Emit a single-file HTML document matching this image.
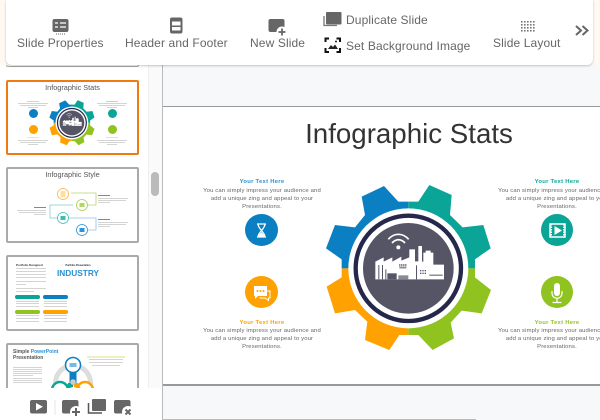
<!DOCTYPE html>
<html><head><meta charset="utf-8">
<style>
html,body{margin:0;padding:0;width:600px;height:420px;overflow:hidden;background:#fff;font-family:"Liberation Sans",sans-serif}
.a{position:absolute}
#top{left:0;top:0;width:600px;height:65px;background:#fff9f2}
#bar{left:6px;top:0;width:587px;height:65px;background:#fff;border-radius:0 0 6px 6px;box-shadow:0 1px 2px rgba(0,0,0,.22)}
.t{position:absolute;font-size:12px;color:#666;white-space:nowrap;letter-spacing:.12px;line-height:14px}
.thumb{position:absolute;left:6px;width:133px;height:76px;box-sizing:border-box;border:2px solid #aaa;border-radius:2px;background:#fff;overflow:hidden}
.in{position:absolute;left:0;top:0;width:129px;height:72px;filter:blur(.3px)}
.tt{position:absolute;left:0;right:0;text-align:center;font-size:7.3px;color:#555;line-height:10px;white-space:nowrap}
.ln{position:absolute;height:1px;background:#d4d4d4}
.c{position:absolute;width:33px;height:33px;border-radius:50%}
.h{position:absolute;width:140px;text-align:center;font-size:5.9px;letter-spacing:.27px;line-height:8px;font-weight:bold;white-space:nowrap}
.p{position:absolute;width:140px;text-align:center;font-size:5.9px;letter-spacing:.15px;line-height:8px;color:#666;white-space:nowrap}
</style></head><body>
<svg width="0" height="0" style="position:absolute">
<defs>
<symbol id="gear" viewBox="0 0 570 570">
<path fill="#0a7fc2" d="M295 95L265 95L222 48L155 80L165 135L135 172L75 165L48 235L95 268L95 295L295 295Z"/>
<path fill="#0aa596" d="M295 95L325 95L358 45L425 75L420 135L458 172L520 165L542 235L495 268L495 295L295 295Z"/>
<path fill="#90c31f" d="M495 295L495 322L543 360L515 430L455 422L422 458L432 505L368 540L325 495L295 495L295 295Z"/>
<path fill="#ffa100" d="M295 495L268 495L238 540L165 510L172 455L135 420L75 430L50 350L95 322L95 295L295 295Z"/>
<circle cx="295" cy="295" r="180" fill="#fff"/>
<circle cx="295" cy="295" r="158" fill="none" stroke="#25284a" stroke-width="13"/>
<circle cx="295" cy="295" r="136" fill="#555566"/>
<g fill="none" stroke="#fff" stroke-width="5">
<path d="M235 208C252 188 278 188 296 208"/><path d="M246 219C258 206 273 206 285 219"/>
</g>
<circle cx="265" cy="232" r="6" fill="#fff"/>
<path fill="#fff" d="M196 328V275L221 262V275L247 262V275L274 260V272L298 262V238H315V274H325V228H336V275H340V248H347V242H362V248H370V284H402V328Z"/>
<g fill="#555566"><rect x="205" y="285" width="3" height="43"/><rect x="216" y="285" width="3" height="43"/><rect x="226" y="298" width="3" height="30"/><rect x="232" y="310" width="28" height="18"/><rect x="268" y="282" width="3" height="8"/><rect x="274" y="282" width="3" height="8"/><rect x="280" y="282" width="3" height="8"/><rect x="286" y="282" width="3" height="8"/><rect x="268" y="292" width="21" height="3"/><rect x="265" y="316" width="30" height="12" fill="#8a8a96"/><rect x="318" y="286" width="3" height="42"/><rect x="330" y="300" width="4" height="4"/><rect x="337" y="300" width="4" height="4"/><rect x="344" y="300" width="4" height="4"/><rect x="330" y="308" width="4" height="4"/><rect x="337" y="308" width="4" height="4"/><rect x="344" y="308" width="4" height="4"/><rect x="358" y="314" width="40" height="3"/></g>
</symbol>
</defs>
</svg>

<!-- left panel -->
<div class="a" style="left:148px;top:65px;width:14px;height:323px;background:#fafafa;border-left:1px solid #eee;box-sizing:border-box"></div>
<div class="a" style="left:151px;top:172px;width:8px;height:24px;background:#bbb;border-radius:4px"></div>
<div class="a" style="left:6px;top:50px;width:133px;height:17px;border:1px solid #aaa;box-sizing:border-box;border-radius:2px"></div>

<div class="thumb" style="top:80px;border-color:#f07a10;height:75px"><div class="in">
<div class="tt" style="top:1px">Infographic Stats</div>
<svg class="a" style="left:37px;top:14px" width="52" height="52"><use href="#gear" width="52" height="52"/></svg>
<div class="c" style="left:20.500px;top:26.500px;width:9px;height:9px;background:#0a7fc2"></div>
<div class="c" style="left:20.500px;top:42.500px;width:9px;height:9px;background:#ffa100"></div>
<div class="c" style="left:99.500px;top:26.500px;width:9px;height:9px;background:#0aa596"></div>
<div class="c" style="left:99.500px;top:42.500px;width:9px;height:9px;background:#90c31f"></div>
<div class="ln" style="left:19px;top:19px;width:12px;background:#b5dcf2"></div>
<div class="ln" style="left:10px;top:21px;width:30px"></div><div class="ln" style="left:12px;top:23px;width:26px"></div><div class="ln" style="left:20px;top:25px;width:10px"></div>
<div class="ln" style="left:98px;top:19px;width:12px;background:#a8e0da"></div>
<div class="ln" style="left:89px;top:21px;width:30px"></div><div class="ln" style="left:91px;top:23px;width:26px"></div><div class="ln" style="left:99px;top:25px;width:10px"></div>
<div class="ln" style="left:19px;top:55px;width:12px;background:#ffe0a8"></div>
<div class="ln" style="left:10px;top:58px;width:30px"></div><div class="ln" style="left:12px;top:60px;width:26px"></div><div class="ln" style="left:20px;top:62px;width:10px"></div>
<div class="ln" style="left:98px;top:55px;width:12px;background:#dbecab"></div>
<div class="ln" style="left:89px;top:58px;width:30px"></div><div class="ln" style="left:91px;top:60px;width:26px"></div><div class="ln" style="left:99px;top:62px;width:10px"></div>
</div></div>

<div class="thumb" style="top:167px"><div class="in">
<div class="tt" style="top:1px">Infographic Style</div>
<svg class="a" style="left:0;top:0" width="130" height="72" fill="none" stroke-width=".8">
<path stroke="#b5d56a" d="M63 24H88V36H79"/>
<path stroke="#7fd0c8" d="M65 36H42V49H49"/>
<path stroke="#8cc4e8" d="M61 49H88V61H80"/>
<circle cx="55" cy="25" r="5.500" stroke="#ffb347" fill="#fff"/><rect x="52.500" y="22" width="5" height="6" fill="#ffdf9e"/>
<circle cx="74" cy="36" r="5.500" stroke="#a8cf45" fill="#fff"/><rect x="71.500" y="34" width="5" height="4" fill="#b5d56a"/>
<circle cx="55" cy="49" r="5.500" stroke="#40bdb0" fill="#fff"/><rect x="52.500" y="47" width="5" height="4" fill="#40bdb0"/>
<circle cx="74" cy="61" r="5.500" stroke="#2d93d6" fill="#fff"/><rect x="71.500" y="59" width="5" height="4" fill="#2d93d6"/>
</svg>
<div class="ln" style="left:90px;top:26px;width:12px;background:#888"></div><div class="ln" style="left:90px;top:29px;width:30px"></div><div class="ln" style="left:90px;top:31px;width:28px"></div><div class="ln" style="left:90px;top:33px;width:12px"></div>
<div class="ln" style="left:26px;top:38px;width:12px;background:#888"></div><div class="ln" style="left:9px;top:41px;width:29px"></div><div class="ln" style="left:11px;top:43px;width:27px"></div><div class="ln" style="left:26px;top:45px;width:12px"></div>
<div class="ln" style="left:90px;top:50px;width:12px;background:#888"></div><div class="ln" style="left:90px;top:53px;width:30px"></div><div class="ln" style="left:90px;top:55px;width:28px"></div><div class="ln" style="left:90px;top:57px;width:12px"></div>
</div></div>

<div class="thumb" style="top:255px"><div class="in">
<div style="position:absolute;left:8px;top:6px;font-size:3px;line-height:4px;font-weight:bold;color:#333;white-space:nowrap">Portfolio Designed</div>
<div style="position:absolute;left:30px;top:7px;width:80px;text-align:center;font-size:2.400px;line-height:4px;font-weight:bold;color:#222;white-space:nowrap">Portfolio Presentation</div>
<div style="position:absolute;left:30px;top:11px;width:80px;text-align:center;font-size:8.300px;font-weight:bold;color:#2a90d0;line-height:10px">INDUSTRY</div>
<div class="ln" style="left:8px;top:11px;width:30px"></div><div class="ln" style="left:8px;top:14px;width:30px"></div><div class="ln" style="left:8px;top:17px;width:30px"></div><div class="ln" style="left:8px;top:20px;width:30px"></div><div class="ln" style="left:8px;top:24px;width:30px"></div><div class="ln" style="left:8px;top:27px;width:10px"></div><div class="ln" style="left:8px;top:31px;width:30px"></div><div class="ln" style="left:8px;top:34px;width:18px"></div>
<div class="a" style="left:7px;top:38px;width:25px;height:4px;background:#0aa596;border-radius:2px"></div>
<div class="a" style="left:35px;top:38px;width:25px;height:4px;background:#0a7fc2;border-radius:2px"></div>
<div class="a" style="left:7px;top:53px;width:25px;height:4px;background:#90c31f;border-radius:2px"></div>
<div class="a" style="left:35px;top:53px;width:25px;height:4px;background:#ffa100;border-radius:2px"></div>
<div class="ln" style="left:8px;top:44px;width:23px"></div><div class="ln" style="left:8px;top:46px;width:23px"></div><div class="ln" style="left:8px;top:49px;width:23px"></div><div class="ln" style="left:36px;top:44px;width:23px"></div><div class="ln" style="left:36px;top:46px;width:23px"></div><div class="ln" style="left:36px;top:49px;width:23px"></div>
<div class="ln" style="left:8px;top:58px;width:23px"></div><div class="ln" style="left:8px;top:61px;width:23px"></div><div class="ln" style="left:8px;top:64px;width:23px"></div><div class="ln" style="left:36px;top:58px;width:23px"></div><div class="ln" style="left:36px;top:61px;width:23px"></div><div class="ln" style="left:36px;top:64px;width:23px"></div>
</div></div>

<div class="thumb" style="top:343px"><div class="in">
<div style="position:absolute;left:5px;top:4px;font-size:5px;font-weight:bold;color:#555;line-height:6px;white-space:nowrap">Simple <span style="color:#2a90d0">PowerPoint</span><br>Presentation</div>
<svg class="a" style="left:0;top:0" width="130" height="72">
<circle cx="65" cy="38" r="17.500" fill="none" stroke="#ddd" stroke-width="5"/>
<rect x="61.500" y="26" width="7" height="12" fill="#0a7fc2"/>
<circle cx="65" cy="20" r="7.500" fill="#fff" stroke="#0a7fc2" stroke-width="1.500"/>
<rect x="61.500" y="18" width="7" height="4" fill="#7ab8e0"/>
<circle cx="52" cy="45" r="8" fill="#fff" stroke="#0aa596" stroke-width="2.500"/>
<circle cx="77" cy="45" r="8" fill="#fff" stroke="#ffa100" stroke-width="2.500"/>
<path d="M60 38L65 38V42L58 44Z" fill="#0aa596"/><path d="M65 38L70 38L73 44L66 42Z" fill="#ffa100"/>
<circle cx="65" cy="37" r="2.800" fill="#ccc"/>
</svg>
<div class="ln" style="left:5px;top:22px;width:29px"></div><div class="ln" style="left:5px;top:24px;width:29px"></div><div class="ln" style="left:5px;top:26px;width:29px"></div><div class="ln" style="left:5px;top:28px;width:29px"></div><div class="ln" style="left:5px;top:30px;width:20px"></div><div class="ln" style="left:5px;top:33px;width:29px"></div><div class="ln" style="left:5px;top:35px;width:29px"></div><div class="ln" style="left:5px;top:37px;width:29px"></div>
<div class="a" style="left:79px;top:11px;width:38px;height:2px;background:#eef0c0"></div>
<div class="ln" style="left:81px;top:14px;width:34px"></div><div class="ln" style="left:81px;top:17px;width:34px"></div><div class="ln" style="left:84px;top:20px;width:28px"></div>
</div></div>

<!-- main -->
<div class="a" style="left:162px;top:65px;width:438px;height:355px;background:#f7f8fa;border-left:1px solid #bbb;box-sizing:border-box;overflow:hidden">
<div class="a" style="left:0;top:41px;width:438px;height:1px;background:#999"></div>
<div class="a" id="slide" style="left:0;top:42px;width:438px;height:277px;background:#fff;overflow:hidden">
<div class="a" style="left:0;top:10px;width:492px;text-align:center;font-size:27.700px;line-height:34px;color:#333">Infographic Stats</div>
<svg class="a" style="left:147px;top:63px" width="190" height="190"><use href="#gear" width="190" height="190"/></svg>

<div class="h" style="left:29px;top:71px;color:#2a90d0">Your Text Here</div>
<div class="p" style="left:29px;top:80px">You can simply impress your audience and</div>
<div class="p" style="left:29px;top:87.500px">add a unique zing and appeal to your</div>
<div class="p" style="left:29px;top:95.500px">Presentations.</div>
<div class="c" style="left:82px;top:107px;width:33px;height:32px;background:#0a7fc2"></div>
<svg class="a" style="left:82px;top:107px" width="33" height="33" fill="none" stroke="#fff" stroke-width="1.300"><path d="M12 10H21M12 23H21M13 10C13 15 20 18 20 23M20 10C20 15 13 18 13 23"/><path fill="#fff" stroke="none" d="M14 21L16.500 18L19 21V22.500H14Z"/></svg>

<div class="c" style="left:82px;top:169px;width:33px;height:32px;background:#ffa100"></div>
<svg class="a" style="left:82px;top:169px" width="33" height="33"><path fill="none" stroke="#fff" d="M22 15H25V22H23.500V24.500L20 22H15V21"/><path fill="#fff" d="M9 10H22V20H13L10 23V20H9Z"/><g fill="#ffa100"><circle cx="12.500" cy="15" r="1"/><circle cx="15.500" cy="15" r="1"/><circle cx="18.500" cy="15" r="1"/></g></svg>
<div class="h" style="left:29px;top:212px;color:#ffa100">Your Text Here</div>
<div class="p" style="left:29px;top:220px">You can simply impress your audience and</div>
<div class="p" style="left:29px;top:228px">add a unique zing and appeal to your</div>
<div class="p" style="left:29px;top:235.500px">Presentations.</div>

<div class="h" style="left:324px;top:71px;color:#0aa596">Your Text Here</div>
<div class="p" style="left:324px;top:80px">You can simply impress your audience and</div>
<div class="p" style="left:324px;top:87.500px">add a unique zing and appeal to your</div>
<div class="p" style="left:324px;top:95.500px">Presentations.</div>
<div class="c" style="left:378px;top:107px;width:32px;height:32px;background:#0aa596"></div>
<svg class="a" style="left:378px;top:107px" width="33" height="33"><rect x="9" y="10" width="15" height="13" fill="none" stroke="#fff" stroke-width="1.500"/><path stroke="#fff" stroke-width="2" stroke-dasharray="1.500 1" d="M10 10V23M23 10V23"/><path fill="#fff" d="M13.500 12L21 16.500L13.500 21Z"/></svg>

<div class="c" style="left:378px;top:169px;width:32px;height:32px;background:#90c31f"></div>
<svg class="a" style="left:378px;top:169px" width="33" height="33" fill="none" stroke="#fff"><rect x="13" y="7" width="6" height="13" rx="3" fill="#fff" stroke="none"/><path d="M11 15V17C11 24 21 24 21 17V15M16 22V26M11.500 26.500H20.500" stroke-width="1.200"/></svg>
<div class="h" style="left:324px;top:212px;color:#90c31f">Your Text Here</div>
<div class="p" style="left:324px;top:220px">You can simply impress your audience and</div>
<div class="p" style="left:324px;top:228px">add a unique zing and appeal to your</div>
<div class="p" style="left:324px;top:235.500px">Presentations.</div>
</div>
<div class="a" style="left:0;top:319px;width:438px;height:2px;background:#999"></div>
<div class="a" style="left:0;top:354px;width:313px;height:1px;background:#bbb"></div>
</div>

<!-- bottom left -->
<div class="a" style="left:0;top:388px;width:162px;height:32px;background:#fff"></div>
<svg class="a" style="left:0;top:388px" width="162" height="32">
<rect x="30" y="12" width="17" height="13.500" rx="2" fill="#666"/><path d="M36 15L43 18.750L36 22.500Z" fill="#fff"/>
<rect x="54.500" y="12" width="1" height="15" fill="#e4e4e4"/>
<rect x="62" y="12" width="16.500" height="13.500" rx="2" fill="#666"/><circle cx="76" cy="24" r="6" fill="#fff"/><path d="M76 20V28M72 24H80" stroke="#666" stroke-width="2"/>
<rect x="92" y="11" width="14" height="12" rx="1" fill="#666"/><path d="M88.500 15V25H102" fill="none" stroke="#555" stroke-width="1.500"/>
<rect x="114" y="12" width="16.500" height="13.500" rx="2" fill="#666"/><circle cx="128" cy="24" r="6" fill="#fff"/><path d="M125.500 21.500L130.500 26.500M130.500 21.500L125.500 26.500" stroke="#666" stroke-width="2"/>
</svg>

<!-- toolbar -->
<div class="a" id="top"></div>
<div class="a" id="bar"></div>
<svg class="a" style="left:0;top:0" width="600" height="65">
<rect x="52.500" y="19" width="16" height="13" rx="2" fill="#666"/>
<path d="M55 23H58M60 23H66M55 27H58M60 27H66" stroke="#fff" stroke-width="1.300"/>
<path d="M56 34H65" stroke="#666" stroke-width="1" stroke-dasharray="1 1"/>
<rect x="170" y="17.500" width="12.500" height="16" rx="2" fill="#666"/>
<rect x="172" y="21.500" width="8.500" height="4" fill="#fff"/><rect x="172" y="27" width="8.500" height="3.500" fill="#fff"/>
<rect x="268.500" y="19" width="16" height="13" rx="2" fill="#666"/><circle cx="282" cy="32" r="5.500" fill="#fff"/><path d="M282 28.500V35.500M278.500 32H285.500" stroke="#666" stroke-width="1.800"/>
<rect x="326" y="12" width="15.500" height="12.500" rx="1" fill="#666"/><path d="M324 16V25.500H337" fill="none" stroke="#777" stroke-width="1.300"/>
<g fill="none" stroke="#111" stroke-width="2"><path d="M329 38.500H325.500V42M336.500 38.500H340V42M325.500 48V52H329M340 48V52H336.500"/></g>
<path d="M328 49L331 45L333 47L335 44.500L338 49Z" fill="#222"/><circle cx="336" cy="41.500" r="1" fill="#222"/>
<g fill="#777"><rect x="521" y="21" width="1.600" height="1.600"/><rect x="524" y="21" width="1.600" height="1.600"/><rect x="527" y="21" width="1.600" height="1.600"/><rect x="530" y="21" width="1.600" height="1.600"/><rect x="533" y="21" width="1.600" height="1.600"/>
<rect x="521" y="24" width="1.600" height="1.600"/><rect x="524" y="24" width="1.600" height="1.600"/><rect x="527" y="24" width="1.600" height="1.600"/><rect x="530" y="24" width="1.600" height="1.600"/><rect x="533" y="24" width="1.600" height="1.600"/>
<rect x="521" y="27" width="1.600" height="1.600"/><rect x="524" y="27" width="1.600" height="1.600"/><rect x="527" y="27" width="1.600" height="1.600"/><rect x="530" y="27" width="1.600" height="1.600"/><rect x="533" y="27" width="1.600" height="1.600"/>
<rect x="521" y="30" width="1.600" height="1.600"/><rect x="524" y="30" width="1.600" height="1.600"/><rect x="527" y="30" width="1.600" height="1.600"/><rect x="530" y="30" width="1.600" height="1.600"/><rect x="533" y="30" width="1.600" height="1.600"/></g>
<path d="M576 26L581 30.500L576 35M582.500 26L587.500 30.500L582.500 35" fill="none" stroke="#666" stroke-width="2"/>
</svg>
<div class="t" style="left:17px;top:36px">Slide Properties</div>
<div class="t" style="left:125px;top:36px">Header and Footer</div>
<div class="t" style="left:250px;top:36px">New Slide</div>
<div class="t" style="left:346px;top:13px">Duplicate Slide</div>
<div class="t" style="left:346px;top:39px">Set Background Image</div>
<div class="t" style="left:493px;top:36px">Slide Layout</div>
</body></html>
